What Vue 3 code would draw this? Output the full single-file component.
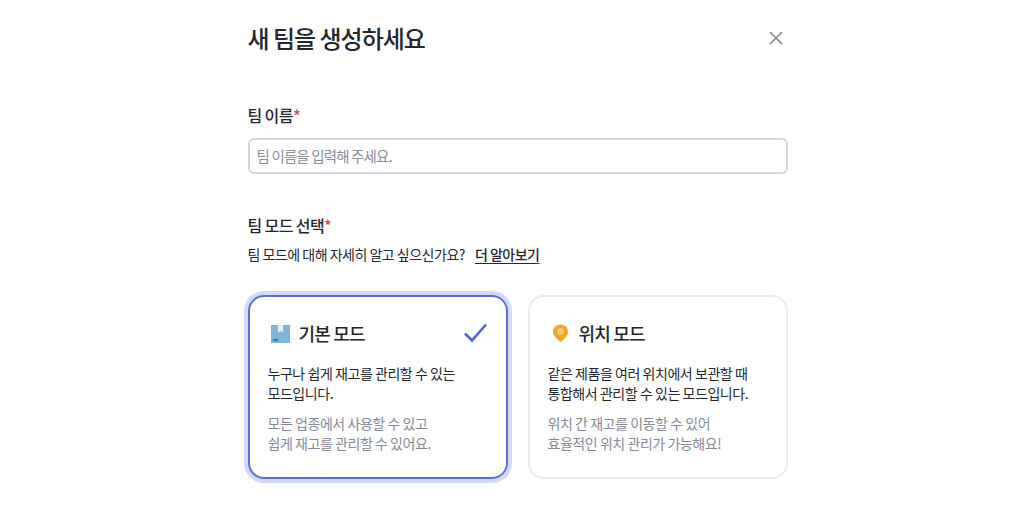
<template>
  <div class="page">
    <div class="modal">
      <header class="head">
        <h1>새 팀을 생성하세요</h1>
        <button class="close" type="button" aria-label="닫기">
          <svg width="16" height="16" viewBox="0 0 16 16" fill="none">
            <path d="M2 2l12 12M14 2L2 14" stroke="#7b7f8a" stroke-width="1.5" />
          </svg>
        </button>
      </header>

      <section class="name-field">
        <label class="label">팀 이름<span class="req">*</span></label>
        <input class="input" type="text" placeholder="팀 이름을 입력해 주세요." />
      </section>

      <section class="mode-field">
        <label class="label">팀 모드 선택<span class="req">*</span></label>
        <p class="help">
          <span>팀 모드에 대해 자세히 알고 싶으신가요?</span>
          <a class="more">더 알아보기</a>
        </p>
        <div class="cards">
          <div v-for="m in modes" :key="m.id" class="card" :class="{ selected: m.id === selected }">
            <div class="card-head">
              <svg v-if="m.id === 'basic'" class="icon" width="24" height="24" viewBox="0 0 24 24">
                <rect x="3" y="4" width="19" height="18" fill="#7fb5da" />
                <path d="M10 4h5v7.500l-2.500-1.600-2.500 1.600z" fill="#e8f3fa" />
                <rect x="5" y="18" width="5" height="2" fill="#4a7899" />
              </svg>
              <svg v-else class="icon" width="24" height="24" viewBox="0 0 24 24">
                <path d="M12.500 3.500c-3.900 0-7.500 3-7.500 7.200 0 4 4.300 7.800 7.500 10.300 3.200-2.500 7.500-6.300 7.500-10.300 0-4.200-3.600-7.200-7.500-7.200z" fill="#f5a623" />
                <circle cx="12.500" cy="10.500" r="3.400" fill="#fbcb7e" />
              </svg>
              <span class="card-title">{{ m.title }}</span>
              <svg v-if="m.id === selected" class="check" width="24" height="24" viewBox="0 0 24 24" fill="none">
                <path d="M2 12.500l7 7L23 3.500" stroke="#4f63d9" stroke-width="2.600" />
              </svg>
            </div>
            <p class="desc">{{ m.desc[0] }}<br />{{ m.desc[1] }}</p>
            <p class="sub">{{ m.sub[0] }}<br />{{ m.sub[1] }}</p>
          </div>
        </div>
      </section>
    </div>
  </div>
</template>

<script setup>
import { ref } from "vue";

const selected = ref("basic");

const modes = [
  {
    id: "basic",
    title: "기본 모드",
    desc: ["누구나 쉽게 재고를 관리할 수 있는", "모드입니다."],
    sub: ["모든 업종에서 사용할 수 있고", "쉽게 재고를 관리할 수 있어요."],
  },
  {
    id: "location",
    title: "위치 모드",
    desc: ["같은 제품을 여러 위치에서 보관할 때", "통합해서 관리할 수 있는 모드입니다."],
    sub: ["위치 간 재고를 이동할 수 있어", "효율적인 위치 관리가 가능해요!"],
  },
];
</script>

<style>
html,
body {
  margin: 0;
  background: #fff;
}
</style>

<style scoped>
.page {
  height: 506px;
  overflow: hidden;
  display: flex;
  justify-content: center;
  font-family: "Noto Sans CJK KR", "Noto Sans", sans-serif;
  color: #25272c;
}

.modal {
  width: 540px;
  margin-left: 14px;
}

.head {
  height: 76px;
  display: flex;
  align-items: center;
  justify-content: space-between;
}

h1 {
  margin: 0;
  font-size: 24px;
  line-height: 36px;
  font-weight: 500;
  letter-spacing: -1px;
}

.close {
  border: 0;
  padding: 0;
  margin-right: 4px;
  background: none;
  display: flex;
}

.name-field {
  margin-top: 26px;
}

.label {
  display: block;
  font-size: 16px;
  line-height: 26px;
  font-weight: 500;
  letter-spacing: -0.6px;
}

.req {
  color: #e5484d;
}

.input {
  display: block;
  box-sizing: border-box;
  width: 100%;
  height: 36px;
  margin-top: 10px;
  padding: 0 7px 2px;
  border: 2px solid #d3d5db;
  border-radius: 6px;
  font-family: inherit;
  font-size: 14.5px;
  letter-spacing: -0.85px;
  outline: none;
}

.input::placeholder {
  color: #8a8e99;
}

.mode-field {
  margin-top: 38px;
}

.help {
  margin: 3px 0 0;
  display: flex;
  gap: 10px;
  font-size: 14px;
  line-height: 26px;
  letter-spacing: -0.5px;
}

.more {
  font-weight: 500;
  text-decoration: underline;
  text-underline-offset: 3px;
}

.cards {
  display: grid;
  grid-template-columns: 260px 260px;
  gap: 20px;
  margin-top: 28px;
}

.card {
  box-sizing: border-box;
  height: 184px;
  padding: 18px 18px 0;
  border: 2px solid #eaebee;
  border-radius: 16px;
}

.card.selected {
  border-color: #5a6edb;
  box-shadow: 0 0 0 4px #d3d9f8;
}

.card-head {
  height: 36px;
  display: flex;
  align-items: center;
  gap: 7px;
}

.card-title {
  font-size: 18px;
  font-weight: 500;
  letter-spacing: -0.8px;
  flex: 1;
}

.icon {
  flex: none;
}

.check {
  margin-right: 1px;
}

.desc,
.sub {
  margin: 0;
  font-size: 14px;
  line-height: 20px;
  letter-spacing: -0.45px;
}

.desc {
  margin-top: 12px;
}

.sub {
  margin-top: 10px;
  color: #858995;
}
</style>
